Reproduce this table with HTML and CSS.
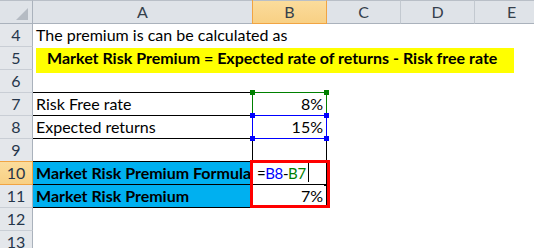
FILE: index.html
```html
<!DOCTYPE html>
<html lang="en">
<head>
<meta charset="utf-8">
<title>Market Risk Premium</title>
<link rel="stylesheet" href="styles.css">
</head>
<body>
<div class="sheet">
  <!-- column headers -->
  <div class="corner"><span class="tri"></span></div>
  <div class="ch">A</div>
  <div class="ch sel">B</div>
  <div class="ch">C</div>
  <div class="ch">D</div>
  <div class="ch">E</div>

  <!-- row 4 -->
  <div class="rh">4</div>
  <div class="c">The premium is can be calculated as</div>
  <div class="c"></div><div class="c"></div><div class="c"></div><div class="c"></div>

  <!-- row 5 -->
  <div class="rh">5</div>
  <div class="c"></div><div class="c"></div><div class="c"></div><div class="c"></div><div class="c"></div>

  <!-- row 6 -->
  <div class="rh">6</div>
  <div class="c bb"></div><div class="c bb"></div><div class="c"></div><div class="c"></div><div class="c"></div>

  <!-- row 7 -->
  <div class="rh">7</div>
  <div class="c bb br">Risk Free rate</div>
  <div class="c bb br num">8%</div>
  <div class="c"></div><div class="c"></div><div class="c"></div>

  <!-- row 8 -->
  <div class="rh">8</div>
  <div class="c bb br">Expected returns</div>
  <div class="c bb br num">15%</div>
  <div class="c"></div><div class="c"></div><div class="c"></div>

  <!-- row 9 -->
  <div class="rh">9</div>
  <div class="c bb br"></div>
  <div class="c bb br"></div>
  <div class="c"></div><div class="c"></div><div class="c"></div>

  <!-- row 10 -->
  <div class="rh sel">10</div>
  <div class="c bb br cyan">Market Risk Premium Formula</div>
  <div class="c bb br formula">=<span class="ref-a">B8</span>-<span class="ref-b">B7</span><span class="caret"></span></div>
  <div class="c"></div><div class="c"></div><div class="c"></div>

  <!-- row 11 -->
  <div class="rh">11</div>
  <div class="c bb br cyan">Market Risk Premium</div>
  <div class="c bb br num">7%</div>
  <div class="c"></div><div class="c"></div><div class="c"></div>

  <!-- row 12 -->
  <div class="rh">12</div>
  <div class="c"></div><div class="c"></div><div class="c"></div><div class="c"></div><div class="c"></div>

  <!-- row 13 -->
  <div class="rh">13</div>
  <div class="c"></div><div class="c"></div><div class="c"></div><div class="c"></div><div class="c"></div>

  <!-- floating text box -->
  <div class="callout">Market Risk Premium = Expected rate of returns - Risk free rate</div>

  <!-- range highlights for the formula being edited -->
  <div class="range range-b">
    <span class="h tl"></span><span class="h tr"></span><span class="h bl"></span><span class="h brr"></span>
  </div>
  <div class="range range-a">
    <span class="h tl"></span><span class="h tr"></span><span class="h bl"></span><span class="h brr"></span>
  </div>
  <div class="frame"></div>
  <div class="dot"></div>
</div>
</body>
</html>
```
FILE: styles.css
```css
html, body {
  margin: 0;
  padding: 0;
}

body {
  width: 534px;
  height: 248px;
  overflow: hidden;
  background: #ffffff;
  font-family: Lato, "Liberation Sans", sans-serif;
  font-size: 16px;
  color: #000000;
}

.sheet {
  position: relative;
  display: grid;
  grid-template-columns: 33px 220px 74px 74px 74px 74px;
  grid-template-rows: 24px repeat(10, 23px);
}

/* headers */
.corner,
.ch {
  box-sizing: border-box;
  background: #dfe3e8;
  border-top: 1px solid #b9bfc7;
  border-bottom: 1px solid #aab2bc;
  border-right: 1px solid #c3c9d0;
}

.corner {
  position: relative;
  border-right-color: #aab2bc;
}

.tri {
  position: absolute;
  right: 4px;
  bottom: 3px;
  width: 0;
  height: 0;
  border-left: 12px solid transparent;
  border-bottom: 12px solid #b5bbc3;
}

.ch {
  text-align: center;
  line-height: 22px;
  color: #35404c;
}

.ch.sel {
  background: linear-gradient(#fbdc9c, #f8d084);
  border-right-color: #f1a443;
  border-bottom-color: #f1a443;
  box-shadow: -1px 0 0 #f1a443;
}

.rh {
  box-sizing: border-box;
  background: #e4e7eb;
  border-right: 1px solid #aab2bc;
  border-bottom: 1px solid #c9ced5;
  text-align: center;
  line-height: 22px;
  color: #26364a;
}

.rh.sel {
  background: linear-gradient(#fbdc9c, #f8d084);
  border-bottom-color: #f1a443;
  border-right-color: #f1a443;
  box-shadow: 0 -1px 0 #f1a443;
}

/* cells */
.c {
  box-sizing: border-box;
  border-right: 1px solid transparent;
  border-bottom: 1px solid transparent;
  padding: 0 3px;
  line-height: 22px;
  white-space: nowrap;
}

.bb { border-bottom-color: #000000; }
.br { border-right-color: #000000; }

.num { text-align: right; }

.cyan {
  background: #00b0f0;
  font-weight: bold;
  overflow: hidden;
}

.formula {
  padding-left: 4px;
  font-size: 15px;
  letter-spacing: -0.4px;
}
.ref-a { color: #0000ff; }
.ref-b { color: #008000; }

/* text cursor while editing the cell */
.caret {
  display: inline-block;
  width: 1px;
  height: 19px;
  margin-left: 2px;
  background: #000000;
  vertical-align: -3px;
}

/* floating text box */
.callout {
  position: absolute;
  left: 36px;
  top: 48px;
  width: 478px;
  height: 25px;
  box-sizing: border-box;
  padding-left: 11px;
  background: #ffff00;
  font-weight: bold;
  line-height: 20px;
  white-space: nowrap;
}

/* range highlights */
.range {
  position: absolute;
  left: 252px;
  width: 75px;
  height: 24px;
  box-sizing: border-box;
  border: 1px solid currentColor;
}

.range-b { top: 92px; color: #008000; }
.range-a { top: 115px; color: #0000ff; }

.h {
  position: absolute;
  width: 5px;
  height: 5px;
  background: currentColor;
}

.h.tl { left: -3px; top: -3px; }
.h.tr { right: -3px; top: -3px; }
.h.bl { left: -3px; bottom: -3px; }
.h.brr { right: -3px; bottom: -3px; }

.frame {
  position: absolute;
  left: 250px;
  top: 160px;
  width: 80px;
  height: 48px;
  box-sizing: border-box;
  border: 3px solid #ff0000;
}

.dot {
  position: absolute;
  left: 324px;
  top: 184px;
  width: 2px;
  height: 2px;
  background: #000000;
}
```
